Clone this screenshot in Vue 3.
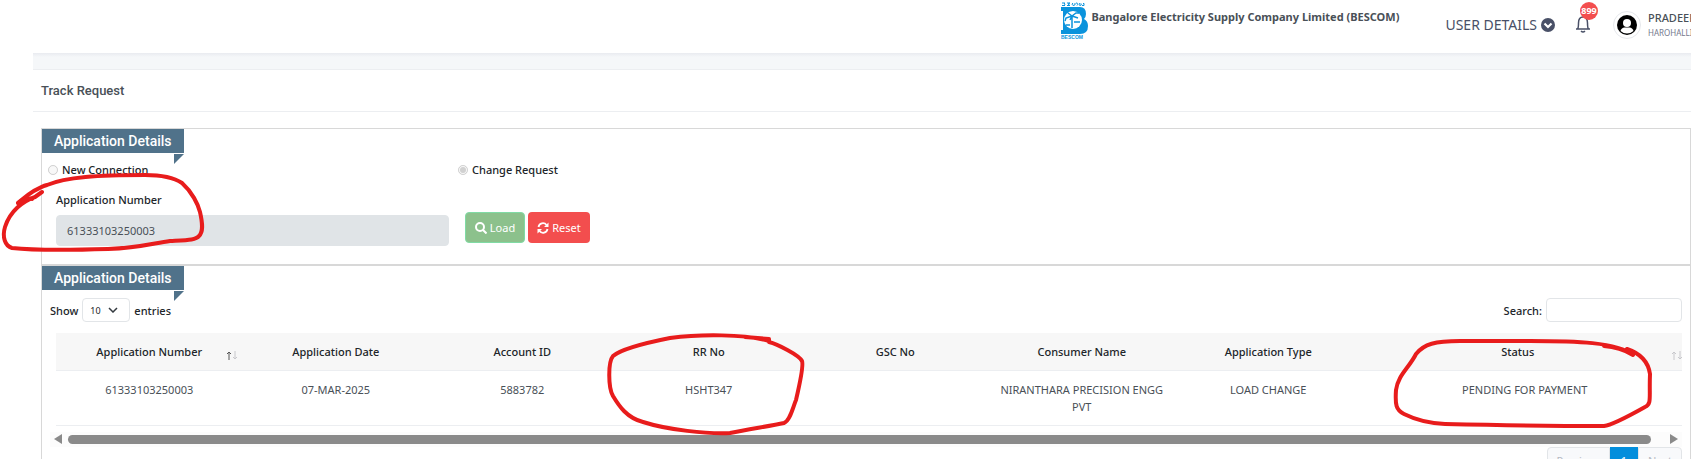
<script setup>
import { ref } from 'vue'

const applicationNumber = ref('61333103250003')
const search = ref('')
const columns = ['Application Number', 'Application Date', 'Account ID', 'RR No', 'GSC No', 'Consumer Name', 'Application Type', 'Status']
const rows = [['61333103250003', '07-MAR-2025', '5883782', 'HSHT347', '', 'NIRANTHARA PRECISION ENGG PVT', 'LOAD CHANGE', 'PENDING FOR PAYMENT']]
</script>

<template>
  <div class="page">
    <header class="topbar">
      <div class="brand">
        <svg class="logo" viewBox="0 0 27 37" aria-hidden="true">
          <g fill="none" stroke="#0b93dc" stroke-width="1">
            <path d="M1 1h3M1 3.500h3M3 1q2 1 0 2.500M6 1h3l-2 1 2 1.500H6M12 1q-2 1 0 2.500 3 0 2-2.500M15 1q3 0 1 2.500M19 1q-2 2 0 2.500 2 0 1-2M22 1.500h1v2h-2" />
          </g>
          <path fill="#0b93dc" d="M0 5h19q6 0 6 7 0 3-2 5 4 2 4 7 0 8-8 8H0v-4h2V9H0z" />
          <circle cx="12" cy="18" r="9" fill="#fff" />
          <path fill="none" stroke="#0b93dc" stroke-width="1.500" d="M11 14v12M11 14l-6 2-1 3M11 14l-4-3M11 14l4-3h3M11 14l6 2M11 14l-2 4M5 23h4M13 20h6" />
          <text x="0" y="37" class="logo-text">BESCOM</text>
        </svg>
        <span class="company">Bangalore Electricity Supply Company Limited (BESCOM)</span>
      </div>
      <button class="details" type="button">
        USER DETAILS
        <svg width="14" height="14" viewBox="0 0 14 14" aria-hidden="true"><circle cx="7" cy="7" r="7" fill="#495067" /><path d="M3.500 5.500 7 9l3.500-3.500" fill="none" stroke="#fff" stroke-width="2.200" /></svg>
      </button>
      <button class="bell" type="button" aria-label="Notifications">
        <svg width="16" height="18" viewBox="0 0 16 18" fill="none" stroke="#495067" stroke-width="1.500" aria-hidden="true"><path d="M1 14h14M2.500 14q1-1 1-6Q3.500 2 8 2t4.500 6q0 5 1 6" /><path d="M6 16q2 2 4 0" /></svg>
        <span class="badge">899</span>
      </button>
      <span class="avatar">
        <svg width="20" height="20" viewBox="0 0 20 20" aria-hidden="true"><circle cx="10" cy="10" r="10" /><circle cx="10" cy="8" r="4" fill="#fff" /><path d="M3.500 16q1-3.500 4-3.500h5q3 0 4 3.500-3 2.500-6.500 2.500T3.500 16" fill="#fff" /></svg>
      </span>
      <div class="user"><strong>PRADEEP</strong><small>HAROHALLI</small></div>
    </header>

    <main class="main">
      <h1 class="title">Track Request</h1>
      <div class="content">
        <section class="panel form-panel">
          <h2 class="tab">Application Details</h2>
          <div class="radios">
            <label><input type="radio" name="kind" disabled>New Connection</label>
            <label><input type="radio" name="kind" checked disabled>Change Request</label>
          </div>
          <div class="fields">
            <div class="field">
              <label for="appno">Application Number</label>
              <input id="appno" v-model="applicationNumber" disabled>
            </div>
            <div class="buttons">
              <button class="btn load" type="button">
                <svg width="12" height="12" viewBox="0 0 12 12" fill="none" stroke="#fff" stroke-width="2" aria-hidden="true"><circle cx="5" cy="5" r="4" /><path d="m8 8 3.500 3.500" /></svg>Load
              </button>
              <button class="btn reset" type="button">
                <svg width="12" height="12" viewBox="0 0 12 12" aria-hidden="true"><path d="M1.500 5A4.500 4.500 0 0 1 9.500 3M10.500 7A4.500 4.500 0 0 1 2.500 9" fill="none" stroke="#fff" stroke-width="1.800" /><path d="M11.500.5V5H7zM.5 11.500V7H5z" fill="#fff" /></svg>Reset
              </button>
            </div>
          </div>
        </section>

        <section class="panel">
          <h2 class="tab">Application Details</h2>
          <div class="tools">
            <label class="length">Show
              <span class="select-box">
                <select><option>10</option><option>25</option></select>
                <svg width="10" height="6" viewBox="0 0 10 6" fill="none" stroke="#343a40" stroke-width="1.500" aria-hidden="true"><path d="m1 1 4 4 4-4" /></svg>
              </span>
              entries</label>
            <label class="search">Search:<input v-model="search" type="search"></label>
          </div>
          <div class="table-box">
            <table>
              <thead>
                <tr>
                  <th v-for="(c, i) in columns" :key="c" scope="col">
                    {{ c }}
                    <svg v-if="i === 0 || i === 7" class="sort" :class="{ asc: i === 0 }" width="10" height="9" viewBox="0 0 10 9" fill="none" aria-hidden="true"><path class="up" d="M2 9V1M0 3l2-2 2 2" /><path class="down" d="M8 0v8M6 6l2 2 2-2" /></svg>
                  </th>
                </tr>
              </thead>
              <tbody>
                <tr v-for="r in rows" :key="r[0]"><td v-for="(v, i) in r" :key="i">{{ v }}</td></tr>
              </tbody>
            </table>
          </div>
          <div class="scroll" aria-hidden="true">
            <svg width="8" height="10" viewBox="0 0 8 10"><path d="M8 0v10L0 5z" fill="#8a8a8a" /></svg>
            <span class="thumb"></span>
            <svg width="8" height="10" viewBox="0 0 8 10"><path d="M0 0v10l8-5z" fill="#8a8a8a" /></svg>
          </div>
          <nav class="pager" aria-label="Pages">
            <button type="button" disabled>Previous</button><button type="button" class="current">1</button><button type="button" disabled>Next</button>
          </nav>
        </section>
      </div>
    </main>

    <svg class="marks" viewBox="0 0 1691 459" preserveAspectRatio="none" aria-hidden="true">
      <path d="M18 203C24 198 33 189 47 185C66 177 98 175 145 175C166 175 176 179 182 183C192 192 198 204 200 212C203 225 203 232 199 236C196 240 188 240 170 241C154 243 140 248 108 249C75 250 30 250 12 248C5 246 2 237 5 227C10 211 23 201 35 197L42 192" />
      <path d="M18 203Q27 197 32 199" />
      <path d="M745 337L769 339L769 341C745 334 700 334 670 338C645 343 620 350 613 356C608 362 608 387 613 396C619 406 627 418 643 422C668 430 707 434 730 433C750 429 770 426 784 423C790 421 793 407 796 400C799 387 804 366 802 361C799 355 777 344 769 342" />
      <path d="M1604 346Q1620 347 1633 355C1617 342 1575 341 1530 341L1460 341C1435 341 1424 344 1416 354C1409 368 1398 375 1396 390C1395 405 1396 410 1404 414Q1422 423 1445 424C1490 425 1560 426 1604 426Q1613 425 1645 407C1652 404 1649 398 1650 374C1648 360 1639 353 1627 349" />
    </svg>
  </div>
</template>

<style>
body { background: #fff; }
</style>

<style scoped>
* { box-sizing: border-box; }
.page { position: relative; height: 100vh; overflow: hidden; background: #fff; color: #212529; font: 11px/17px "Noto Sans", "Open Sans", sans-serif; }
button, input, select { font: inherit; color: inherit; margin: 0; }
button { border: 0; background: none; padding: 0; }
.topbar { display: flex; justify-content: flex-end; align-items: flex-start; height: 53px; color: #495057; }
.brand { display: flex; gap: 3px; padding-top: 2px; margin-right: 46px; }
.logo { width: 27px; height: 37px; }
.logo-text { font: 700 5px "Liberation Sans", sans-serif; fill: #0b93dc; }
.company { font-size: 11px; font-weight: 700; line-height: 30px; white-space: nowrap; }
.details { display: flex; align-items: center; gap: 4px; font-size: 14px; line-height: 18px; margin: 16px 20px 0 0; white-space: nowrap; color: #495067; }
.bell { position: relative; width: 16px; height: 18px; margin: 15px 22px 0 0; }
.bell svg { display: block; }
.badge { position: absolute; left: 5px; top: -13px; width: 18px; height: 18px; border-radius: 9px; background: #f34e4e; color: #fff; font-size: 9px; font-weight: 700; line-height: 18px; text-align: center; }
.avatar { display: flex; align-items: center; justify-content: center; width: 28px; height: 28px; border: 1px solid #e6e8ec; border-radius: 50%; margin: 11px 7px 0 0; }
.user { width: 43px; overflow: hidden; white-space: nowrap; padding-top: 10px; }
.user strong { display: block; font-weight: 500; line-height: 16px; }
.user small { display: block; font-size: 8px; line-height: 14px; color: #74788d; }
.main { margin-left: 33px; padding-top: 16px; background: linear-gradient(#e9ebf0, #f5f7f9 4px, #f5f7f9 16px, #fff 16px); }
.title { margin: 0; border: solid #eceef1; border-width: 1px 0; padding: 0 8px; font: 500 13px/41px Roboto, sans-serif; color: #495057; }
.content { padding: 16px 0 0 8px; }
.panel { border: 1px solid #d8d8d8; }
.form-panel { height: 137px; }
.tab { position: relative; width: 142px; margin: 0; padding-left: 12px; background: #50728a; color: #fff; font: 500 14px/24px Roboto, sans-serif; }
.tab::after { content: ""; position: absolute; right: 0; top: 25px; border-top: 10px solid #50728a; border-right: 10px solid transparent; }
.radios { display: grid; grid-template-columns: 410px 1fr; padding: 8px 0 0 6px; font-weight: 500; }
.radios label { display: flex; align-items: center; gap: 4px; }
.radios input { width: 10px; height: 10px; }
.fields { display: flex; gap: 16px; padding: 13px 0 0 14px; }
.field { width: 393px; display: flex; flex-direction: column; gap: 7px; font-weight: 500; }
.field input { height: 31px; border: 1px solid #e0e4e7; border-radius: 4px; background: #e0e4e7; padding: 0 10px; color: #495057; font-weight: 400; }
.buttons { display: flex; gap: 3px; padding-top: 21px; }
.btn { display: flex; align-items: center; justify-content: center; gap: 3px; height: 31px; border-radius: 4px; color: #fff; }
.load { width: 60px; border: 1px solid #80dba5; background: #8cc18c; }
.reset { width: 62px; background: #f34e4e; }
.tools { display: flex; justify-content: space-between; padding: 8px 8px 0; font-weight: 500; }
.length, .search { display: flex; align-items: center; gap: 4px; }
.select-box { position: relative; display: block; width: 48px; height: 24px; }
.select-box select { width: 100%; height: 100%; appearance: none; border: 1px solid #e2e5e8; border-radius: 4px; background: #fff; padding: 0 7px; font-size: 9px; font-weight: 400; }
.select-box svg { position: absolute; right: 12px; top: 9px; }
.search input { width: 136px; height: 24px; border: 1px solid #e2e5e8; border-radius: 4px; background: #fff; }
.table-box { padding: 11px 8px 0 14px; }
table { width: 100%; border-collapse: collapse; table-layout: fixed; }
th, td { padding: 10px 10px 8px; border-bottom: 1px solid #eceef1; text-align: center; vertical-align: top; font-weight: 400; color: #495057; }
th { position: relative; width: 11.47%; height: 37px; background: #f7f7f7; color: #212529; font-weight: 500; }
td { height: 55px; }
th:last-child { width: auto; padding-right: 18px; }
td:last-child { padding-right: 4px; }
.sort { position: absolute; right: 6px; bottom: 10px; stroke: #c8c8cc; }
.asc .up { stroke: #555; }
th:last-child .sort { right: 0; }
.scroll { display: flex; align-items: center; gap: 6px; height: 15px; margin: 6px 8px 0; padding: 0 4px; background: #fcfcfc; }
.thumb { flex: 1; height: 9px; margin-right: 13px; border-radius: 5px; background: #8a8a8a; }
.pager { display: flex; justify-content: flex-end; padding-right: 8px; }
.pager button { height: 28px; width: 44px; border: 1px solid #e2e5e8; background: #f8f9fb; color: #b4b8c2; }
.pager button:first-child { width: 63px; border-radius: 4px 0 0 4px; }
.pager button:last-child { border-radius: 0 4px 4px 0; }
.pager .current { width: 28px; background: #038edc; border-color: #038edc; color: #fff; }
.marks { position: absolute; inset: 0; width: 100%; height: 100%; pointer-events: none; fill: none; stroke: #e81c1c; stroke-width: 4; stroke-linecap: round; stroke-linejoin: round; }
</style>
